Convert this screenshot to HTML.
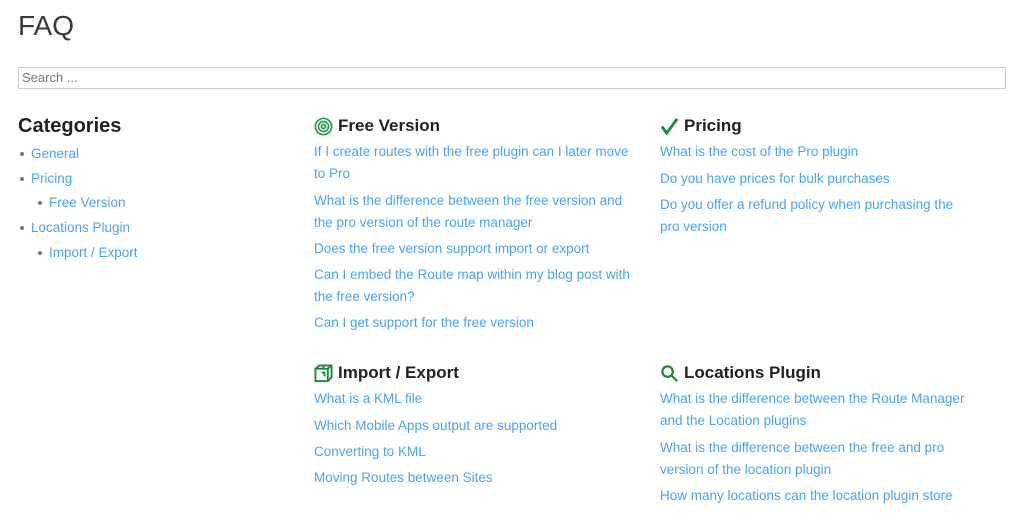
<!DOCTYPE html>
<html><head><style>
body{margin:0;background:#fff;font-family:"Liberation Sans",sans-serif;color:#333;width:1024px;height:527px;overflow:hidden;position:relative}
a{color:#4aa3ee;text-decoration:none}
.faq{position:absolute;left:18px;top:10px;font-size:28px;font-weight:normal;color:#3a3a3a}
.search{position:absolute;left:18px;top:67px;width:983px;height:20px;border:1px solid #ccc;font-size:13px;color:#777;line-height:20px;padding-left:3px;box-sizing:content-box}
.cat{position:absolute;left:18px;top:115px;font-size:20px;font-weight:bold;color:#222}
ul{margin:0;padding:0;list-style:none}
.side{position:absolute;left:20px;top:144px;font-size:13.5px}
.side li{height:24.7px;line-height:20px;position:relative;padding-left:11px}
.side li:before{content:"";position:absolute;left:0;top:8px;width:4px;height:4px;border-radius:50%;background:#777}
.side li.sub{padding-left:29px}
.side li.sub:before{left:18px}
.col{position:absolute;width:322px}
.col h3{margin:0;font-size:17px;font-weight:bold;color:#222;height:24px;line-height:24px;display:flex;align-items:center}
.col h3 svg{margin-right:5px}
.col li{font-size:13.5px;line-height:22px;margin-top:4.3px}
.col ul{margin-top:-1px}
</style></head><body>
<div class="faq">FAQ</div>
<div class="search">Search ...</div>
<div class="cat">Categories</div>
<ul class="side">
<li><a>General</a></li>
<li><a>Pricing</a></li>
<li class="sub"><a>Free Version</a></li>
<li><a>Locations Plugin</a></li>
<li class="sub"><a>Import / Export</a></li>
</ul>
<div class="col" style="left:314px;top:114px">
<h3><svg width="19" height="19" viewBox="0 0 20 20" fill="none" stroke="#2a9a4a" stroke-width="1.8"><circle cx="10" cy="10" r="8.5"/><circle cx="10" cy="10" r="5.3"/><circle cx="10" cy="10" r="2.2"/></svg>Free Version</h3>
<ul>
<li><a>If I create routes with the free plugin can I later move to Pro</a></li>
<li><a>What is the difference between the free version and the pro version of the route manager</a></li>
<li><a>Does the free version support import or export</a></li>
<li><a>Can I embed the Route map within my blog post with the free version?</a></li>
<li><a>Can I get support for the free version</a></li>
</ul></div>
<div class="col" style="left:660px;top:114px;width:306px">
<h3><svg width="19" height="19" viewBox="0 0 20 20" fill="none" stroke="#1f8a3a" stroke-width="3"><path d="M2 10l5 7L18 2"/></svg>Pricing</h3>
<ul>
<li><a>What is the cost of the Pro plugin</a></li>
<li><a>Do you have prices for bulk purchases</a></li>
<li><a>Do you offer a refund policy when purchasing the pro version</a></li>
</ul></div>
<div class="col" style="left:314px;top:361px">
<h3><svg width="19" height="19" viewBox="0 0 20 20" fill="none" stroke="#1f8a3a" stroke-width="2"><rect x="1.5" y="5" width="13" height="13"/><path d="M1.5 5l4-3.5h13V14l-4 4M14.5 5l4-3.5M6 5v-1M10 5V2M8 9h3v4"/></svg>Import / Export</h3>
<ul>
<li><a>What is a KML file</a></li>
<li><a>Which Mobile Apps output are supported</a></li>
<li><a>Converting to KML</a></li>
<li><a>Moving Routes between Sites</a></li>
</ul></div>
<div class="col" style="left:660px;top:361px;width:310px">
<h3><svg width="19" height="19" viewBox="0 0 20 20" fill="none" stroke="#1f8a3a" stroke-width="2.4"><circle cx="8" cy="8" r="5.5"/><path d="M12 12l6 6"/></svg>Locations Plugin</h3>
<ul>
<li><a>What is the difference between the Route Manager and the Location plugins</a></li>
<li><a>What is the difference between the free and pro version of the location plugin</a></li>
<li><a>How many locations can the location plugin store</a></li>
</ul></div>
</body></html>
